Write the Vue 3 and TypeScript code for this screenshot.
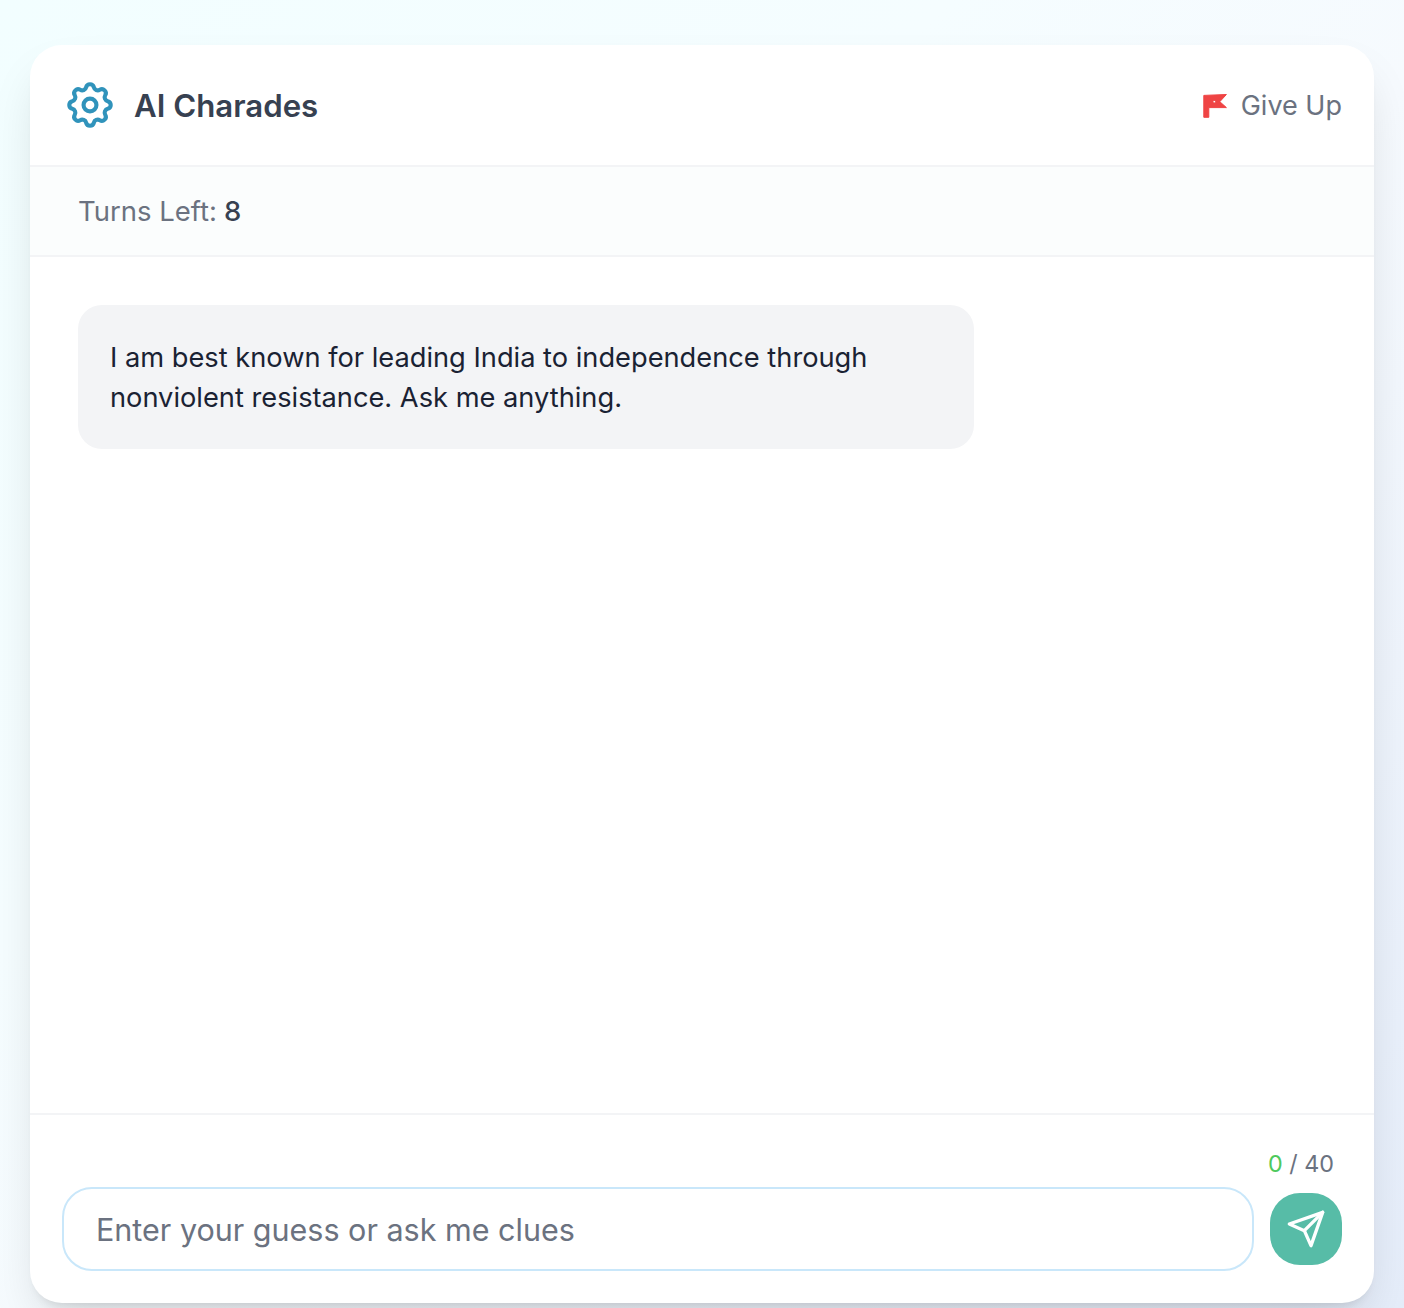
<script setup lang="ts">
import { computed, ref } from 'vue'

const guess = ref('')
const turnsLeft = ref(8)
const maxLength = 40
const charCount = computed(() => guess.value.length)
</script>

<template>
  <main class="page">
    <section class="game-card">
      <header class="card-header">
        <div class="brand">
          <svg class="brand-icon" viewBox="2 2 20 20" fill="none" stroke="currentColor" stroke-width="1.8" stroke-linecap="round" stroke-linejoin="round">
            <path d="M10.325 4.317c.426-1.756 2.924-1.756 3.35 0a1.724 1.724 0 0 0 2.573 1.066c1.543-.94 3.31.826 2.37 2.37a1.724 1.724 0 0 0 1.065 2.572c1.756.426 1.756 2.924 0 3.35a1.724 1.724 0 0 0-1.066 2.573c.94 1.543-.826 3.31-2.37 2.37a1.724 1.724 0 0 0-2.572 1.065c-.426 1.756-2.924 1.756-3.35 0a1.724 1.724 0 0 0-2.573-1.066c-1.543.94-3.31-.826-2.37-2.37a1.724 1.724 0 0 0-1.065-2.572c-1.756-.426-1.756-2.924 0-3.35a1.724 1.724 0 0 0 1.066-2.573c-.94-1.543.826-3.31 2.37-2.37 1 .608 2.296.07 2.572-1.065z" />
            <circle cx="12" cy="12" r="2.8" />
          </svg>
          <h1 class="brand-name">AI Charades</h1>
        </div>
        <button type="button" class="give-up">
          <svg class="flag-icon" viewBox="0 0 26 26">
            <path fill-rule="evenodd" d="M.8 3.4 23.4 2.5 16.8 9.7 23.4 15.6H5.8V25.3H.8ZM11.3 8.4a1.3 1.3 0 1 0 .01 0Z" />
          </svg>
          <span>Give Up</span>
        </button>
      </header>

      <div class="turns-bar">
        Turns Left: <strong class="turns-count">{{ turnsLeft }}</strong>
      </div>

      <div class="messages">
        <div class="bubble">I am best known for leading India to independence through nonviolent resistance. Ask me anything.</div>
      </div>

      <footer class="composer">
        <div class="char-count"><span class="char-now">{{ charCount }}</span> / {{ maxLength }}</div>
        <form class="composer-row" @submit.prevent>
          <input v-model="guess" class="guess-input" type="text" :maxlength="maxLength" placeholder="Enter your guess or ask me clues" />
          <button type="submit" class="send-btn" aria-label="Send">
            <svg viewBox="0 0 24 24" width="40" height="40" fill="none" stroke="currentColor" stroke-width="2" stroke-linecap="round" stroke-linejoin="round">
              <line x1="22" y1="2" x2="11" y2="13" />
              <polygon points="22 2 15 22 11 13 2 9 22 2" />
            </svg>
          </button>
        </form>
      </footer>
    </section>
  </main>
</template>

<style>
html, body { margin: 0; }
</style>

<style scoped>
.page {
  box-sizing: border-box;
  height: 1308px;
  padding: 45px 30px 5px;
  background: linear-gradient(135deg, #f2feff 0%, #f5fdff 35%, #f6fafe 55%, #e5edfa 100%);
  font-family: Inter, 'Liberation Sans', sans-serif;
  overflow: hidden;
}

.game-card {
  height: 100%;
  display: flex;
  flex-direction: column;
  background: #fff;
  border-radius: 32px;
  box-shadow: 0 25px 50px -12px rgba(0, 0, 0, 0.15), 0 8px 10px -6px rgba(0, 0, 0, 0.1);
}

/* header */
.card-header {
  height: 120px;
  flex: none;
  display: flex;
  align-items: center;
  justify-content: space-between;
  padding: 0 32px 0 37px;
  border-bottom: 2px solid #f3f4f6;
}

.brand { display: flex; align-items: center; gap: 21px; }
.brand-icon { width: 46px; height: 46px; color: #3093bb; }
.brand-name { margin: 0; padding-top: 2px; font-size: 31.2px; font-weight: 600; color: #374151; }

.give-up {
  display: flex;
  align-items: center;
  gap: 12px;
  padding: 0;
  border: 0;
  background: none;
  font: inherit;
  font-size: 27px;
  color: #6b7280;
}

.flag-icon { width: 26px; height: 26px; fill: #ef4444; stroke: #ef4444; stroke-width: 1; stroke-linejoin: round; }

/* turns */
.turns-bar {
  height: 90px;
  flex: none;
  box-sizing: border-box;
  display: flex;
  align-items: center;
  gap: 7px;
  padding: 0 48px;
  background: #fbfdfd;
  border-bottom: 2px solid #f3f4f6;
  font-size: 27.5px;
  color: #6b7280;
}

.turns-count { font-weight: 500; color: #374151; }

/* chat */
.messages { flex: 1; padding: 48px; }

.bubble {
  box-sizing: border-box;
  width: 896px;
  padding: 33px 32px 31px;
  background: #f3f4f6;
  border-radius: 24px;
  font-size: 27.24px;
  line-height: 40px;
  color: #1a2233;
}

/* input */
.composer {
  flex: none;
  height: 190px;
  box-sizing: border-box;
  padding: 36px 32px 32px;
  border-top: 2px solid #f3f4f6;
}

.char-count {
  height: 28px;
  margin-bottom: 8px;
  padding-right: 8px;
  text-align: right;
  font-size: 23.3px;
  line-height: 26px;
  color: #6b7280;
}

.char-now { color: #4ec95c; }

.composer-row { display: flex; align-items: center; gap: 16px; }

.guess-input {
  flex: 1;
  min-width: 0;
  box-sizing: border-box;
  height: 84px;
  padding: 0 32px;
  border: 2px solid #c9e7fa;
  border-radius: 30px;
  outline: none;
  background: #fff;
  font: inherit;
  font-size: 30.5px;
  color: #1f2937;
}

.guess-input::placeholder { color: #6b7280; opacity: 1; }

.send-btn {
  flex: none;
  width: 72px;
  height: 72px;
  display: flex;
  align-items: center;
  justify-content: center;
  padding: 0;
  border: 0;
  border-radius: 30px;
  background: #57bca7;
  color: #fff;
}
</style>
